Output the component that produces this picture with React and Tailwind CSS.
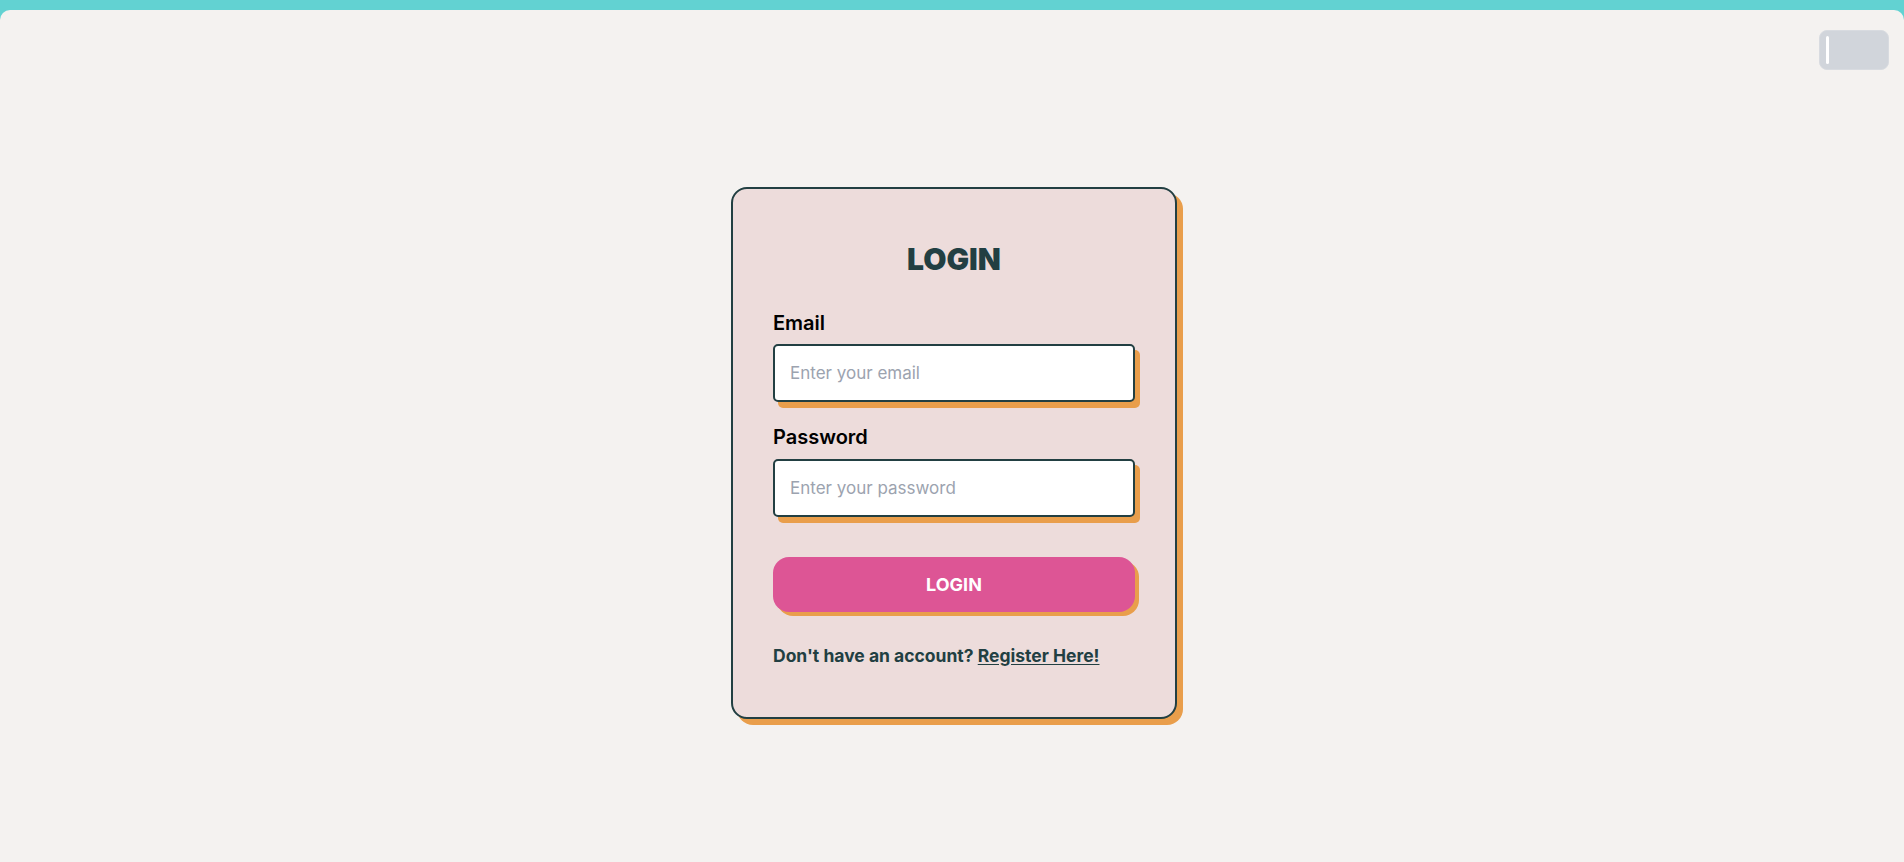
export default function App() {
    return (
        <section
            className="min-h-screen w-full bg-[#62d2d2] pt-[10px]"
            style={{ fontFamily: "Inter, 'Noto Sans', sans-serif" }}
        >
            <div className="min-h-[852px] w-full bg-[#f4f2f0] rounded-t-[10px] flex flex-col">
                {/* Top bar */}
                <div className="flex justify-end pt-5 pr-[15px]">
                    <button className="w-[70px] h-10 rounded-lg bg-[#d1d5db] border border-[#d8dbe0] flex items-center pl-[6px]">
                        <span className="block w-[3px] h-7 bg-white rounded-sm"></span>
                    </button>
                </div>

                {/* Card */}
                <div className="flex justify-center mt-[117px] pl-1">
                    <div className="w-[446px] bg-[#eddcdb] border-2 border-[#223f42] rounded-2xl shadow-[6px_6px_0_#e99e4b] pt-[52px] pb-[47px] px-10">
                        <h1 className="text-3xl font-black text-center text-[#223f42] mb-8">
                            LOGIN
                        </h1>

                        <div className="mb-[21px]">
                            <label className="block text-xl font-semibold text-black mb-[7px]">Email</label>
                            <input
                                type="email"
                                placeholder="Enter your email"
                                className="w-full h-[58px] bg-white border-2 border-[#223f42] rounded-[5px] px-[15px] text-[17px] text-[#223f42] placeholder:text-[#9ca3af] shadow-[5px_6px_0_#e99e4b] outline-none"
                            />
                        </div>

                        <div className="mb-10">
                            <label className="block text-xl font-semibold text-black mb-2">Password</label>
                            <input
                                type="password"
                                placeholder="Enter your password"
                                className="w-full h-[58px] bg-white border-2 border-[#223f42] rounded-[5px] px-[15px] text-[17px] text-[#223f42] placeholder:text-[#9ca3af] shadow-[5px_6px_0_#e99e4b] outline-none"
                            />
                        </div>

                        <button className="w-full h-[55px] rounded-2xl bg-[#dd5595] text-white text-lg font-bold shadow-[4px_4px_0_#e99e4b]">
                            LOGIN
                        </button>

                        <p className="mt-[30px] text-[17.5px] leading-7 font-bold text-[#223f42]">
                            Don't have an account?{" "}
                            <a href="#" className="underline underline-offset-2">
                                Register Here!
                            </a>
                        </p>
                    </div>
                </div>
            </div>
        </section>
    );
}
